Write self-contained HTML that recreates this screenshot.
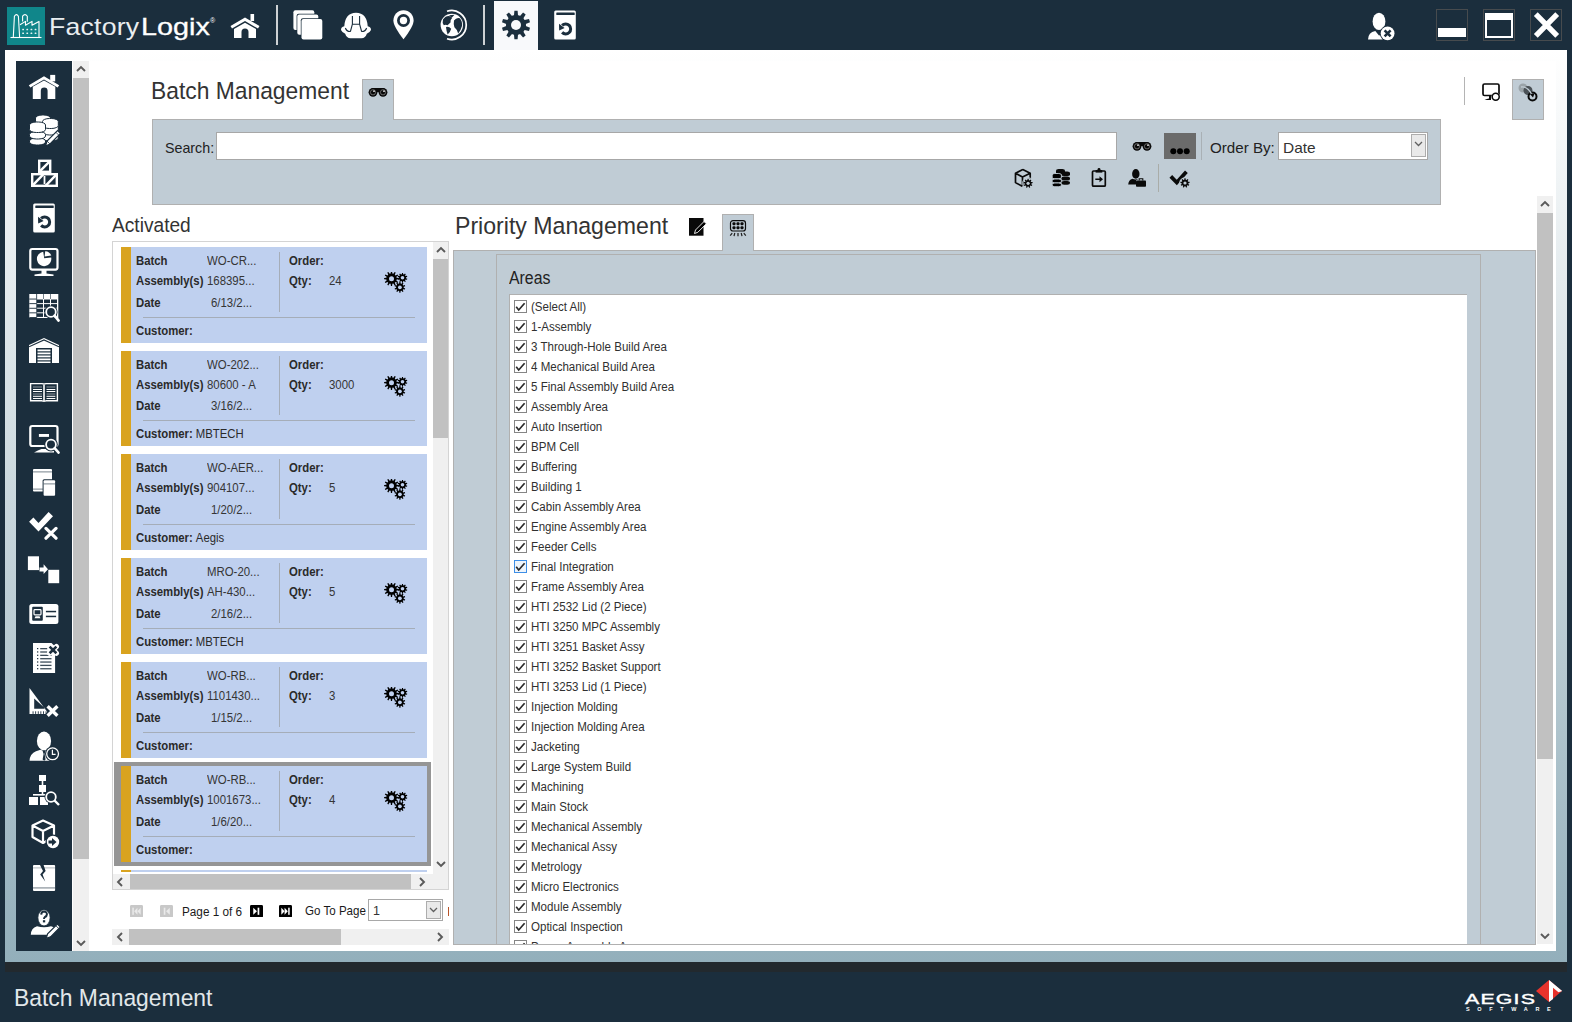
<!DOCTYPE html><html><head><meta charset="utf-8"><title>FactoryLogix</title><style>
*{margin:0;padding:0;box-sizing:border-box}
html,body{width:1572px;height:1022px;overflow:hidden;background:#1b2e3d;font-family:"Liberation Sans",sans-serif;position:relative}
.a{position:absolute;display:block}
.t{position:absolute;white-space:nowrap;line-height:1}
.pnl{background:#c0ccd5;border:1px solid #b0b0b0}
.sb{background:#f0f0f0}
.th{background:#c1c1c1}
.card{position:absolute;left:121px;width:306px;height:96px;background:#bfd0ef}
.card .g{position:absolute;left:0;top:0;width:10px;height:96px;background:#d9a31f}
.card .l{position:absolute;left:15px;font-size:12px;font-weight:bold;color:#2a2a2a;white-space:nowrap;line-height:1;transform:scaleX(0.945);transform-origin:0 0}
.card .v{position:absolute;font-size:12px;color:#353535;white-space:nowrap;line-height:1;transform:scaleX(0.95);transform-origin:0 0}
.card .vs{position:absolute;left:158px;top:5px;width:1px;height:60px;background:#a5adb8}
.card .hs{position:absolute;left:22px;top:70px;width:272px;height:1px;background:#a5adb8}
.cb{position:absolute;width:13px;height:13px;border:1px solid #858585;background:#fff}
.cb svg{position:absolute;left:0;top:0}
.it{position:absolute;font-size:12px;color:#303030;white-space:nowrap;line-height:1;transform:scaleX(0.962);transform-origin:0 0}
</style></head><body>
<div class="t" style="left:49px;top:14.5px;font-size:24px;color:#e9edf0;font-weight:normal;transform:scaleX(1.11);transform-origin:0 0;letter-spacing:0.2px">Factory</div>
<div class="t" style="left:141px;top:14.5px;font-size:24px;color:#fff;font-weight:normal;transform:scaleX(1.2);transform-origin:0 0;-webkit-text-stroke:0.3px #fff">Logix</div>
<div class="t" style="left:210px;top:17px;font-size:7px;color:#fff">&reg;</div>
<div class="a" style="left:276px;top:5px;width:2px;height:40px;background:rgba(255,255,255,0.78)"></div>
<div class="a" style="left:483px;top:5px;width:2px;height:40px;background:rgba(255,255,255,0.78)"></div>
<div class="a" style="left:494px;top:1px;width:44px;height:49px;background:#f8f9fb"></div>
<div class="a" style="left:1436px;top:9px;width:32px;height:32px;border:1px solid #474b4e"></div>
<div class="a" style="left:1483px;top:9px;width:32px;height:32px;border:1px solid #474b4e"></div>
<div class="a" style="left:1530px;top:9px;width:32px;height:32px;border:1px solid #474b4e"></div>
<div class="a" style="left:1438px;top:28px;width:28px;height:9px;background:#fff"></div>
<div class="a" style="left:1485px;top:12.5px;width:28px;height:25.5px;border:2.6px solid #fff;border-top-width:7.6px"></div>
<svg class="a" style="left:7px;top:7px" width="38" height="38" viewBox="7 7 38 38"><rect x="7" y="7" width="38" height="38" fill="#10868a"/><g fill="none" stroke="#fff" stroke-width="1.1" stroke-linejoin="round"><path d="M10.5,37.5 H41.5"/><path d="M13.3,37.3 L14.4,16.2 Q16.4,13 18.4,16.2 L19.6,37.3"/><path d="M22.6,21.5 V16.2 Q25,13 27.3,16.2 V21.8"/><path d="M20,24.8 L25.5,21.4 V25.2 L32,21.4 V25.2 L39,21.4 V37.3"/></g><g fill="#fff" fill-opacity="0.9"><rect x="22.20" y="28.8" width="1.8" height="1.5" rx="0.5"/><rect x="22.20" y="32.4" width="1.8" height="1.5" rx="0.5"/><rect x="26.35" y="28.8" width="1.8" height="1.5" rx="0.5"/><rect x="26.35" y="32.4" width="1.8" height="1.5" rx="0.5"/><rect x="30.50" y="28.8" width="1.8" height="1.5" rx="0.5"/><rect x="30.50" y="32.4" width="1.8" height="1.5" rx="0.5"/><rect x="34.65" y="28.8" width="1.8" height="1.5" rx="0.5"/><rect x="34.65" y="32.4" width="1.8" height="1.5" rx="0.5"/></g></svg>
<svg class="a" style="left:230px;top:14px;" width="30" height="25" viewBox="0 0 30 25"><rect x="20.5" y="0" width="3.6" height="7" fill="#fff"/><path d="M0.5,12 L15,3.5 L29.5,12 L28,14.6 L15,7 L2,14.6 Z" fill="#fff"/><path d="M4,15 L15,8.8 L26,15 V24 H18.5 V18 A3.5,3.5 0 0 0 11.5,18 V24 H4 Z" fill="#fff"/></svg>
<svg class="a" style="left:292px;top:9px" width="32" height="32" viewBox="292 9 32 32"><rect x="293.4" y="10.2" width="20.9" height="19.7" rx="2" fill="#fff"/><rect x="296.6" y="13.8" width="22.3" height="21.6" rx="2" fill="#1b2e3d"/><rect x="297.3" y="14.5" width="21" height="20.3" rx="2" fill="#fff"/><rect x="300.8" y="18.3" width="22.2" height="22" rx="2" fill="#1b2e3d"/><rect x="301.5" y="19" width="20.8" height="20.6" rx="2" fill="#fff"/></svg>
<svg class="a" style="left:340px;top:11px" width="32" height="29" viewBox="340 11 32 29"><path d="M341,30 Q341,26.8 344.3,26.2 Q345,13 356,12.7 Q367,13 367.7,26.2 Q371,26.8 371,30 Q369.5,33 366.8,33.8 Q365.5,38.2 361.5,38.2 H350.5 Q346.5,38.2 345.2,33.8 Q342.5,33 341,30 Z" fill="#fff"/><path d="M352.4,16 V24.2 H359.6 V16 M352.4,24.2 L350.4,31.5 M359.6,24.2 L361.6,31.5 M345.4,28 Q346.5,31.6 350.4,31.5 M366.6,28 Q365.5,31.6 361.6,31.5" stroke="#1b2e3d" stroke-width="1.1" fill="none"/></svg>
<svg class="a" style="left:393px;top:10px;" width="21" height="30" viewBox="0 0 21 30"><path d="M10.5,0.2 C16.3,0.2 20.6,4.6 20.6,10.5 C20.6,17 10.5,29.3 10.5,29.3 C10.5,29.3 0.4,17 0.4,10.5 C0.4,4.6 4.7,0.2 10.5,0.2 Z" fill="#fff"/><circle cx="10.5" cy="10.5" r="6.5" fill="#1b2e3d"/><circle cx="10.5" cy="10.5" r="3.7" fill="#fff"/></svg>
<svg class="a" style="left:439px;top:9px" width="29" height="32" viewBox="439 9 29 32"><path d="M447,11.3 A14.5,14.5 0 1 1 447,38.7" stroke="#fff" stroke-width="1.7" fill="none"/><circle cx="451.8" cy="25" r="11.2" fill="#fff"/><path d="M443,19.5 Q446,15.3 450,16.2 L452,18.3 Q449.5,20.5 450.5,22.5 L447.5,25.2 Q445.5,24.3 443.8,25.3 Q442,23 443,19.5 Z" fill="#1b2e3d"/><path d="M449.2,15.2 L454.5,14.8 L451.5,18 Z" fill="#1b2e3d"/><path d="M446,27 Q449,26.3 451.2,28.8 Q450.3,32.5 447.6,34.6 Q446.4,31 446,27 Z" fill="#1b2e3d"/><path d="M454,20.5 Q456.5,17 459.8,18.2 Q462.6,21.5 462,26 Q460.6,31 458.2,33.4 Q456.8,29 454.4,27.2 Q453.3,24 454,20.5 Z" fill="#1b2e3d"/></svg>
<svg class="a" style="left:501px;top:10px;" width="30" height="30" viewBox="0 0 30 30"><circle cx="15" cy="15" r="10" fill="#1b2e3d"/><path d="M12.98,5.41 L13.39,0.79 L16.61,0.79 L17.02,5.41 L19.00,6.06 L22.05,2.56 L24.66,4.45 L22.27,8.43 L23.50,10.12 L28.01,9.07 L29.01,12.14 L24.74,13.96 L24.74,16.04 L29.01,17.86 L28.01,20.93 L23.50,19.88 L22.27,21.57 L24.66,25.55 L22.05,27.44 L19.00,23.94 L17.02,24.59 L16.61,29.21 L13.39,29.21 L12.98,24.59 L11.00,23.94 L7.95,27.44 L5.34,25.55 L7.73,21.57 L6.50,19.88 L1.99,20.93 L0.99,17.86 L5.26,16.04 L5.26,13.96 L0.99,12.14 L1.99,9.07 L6.50,10.12 L7.73,8.43 L5.34,4.45 L7.95,2.56 L11.00,6.06 Z" fill="#1b2e3d"/><circle cx="15" cy="15" r="5.0" fill="#f8f9fb"/></svg>
<svg class="a" style="left:554px;top:10px;" width="22" height="30" viewBox="0 0 22 30"><rect x="0.2" y="0.4" width="21.6" height="29.2" rx="1.5" fill="#fff"/><rect x="2.3" y="2.6" width="18.4" height="2.5" rx="0.5" fill="#1b2e3d"/><path d="M8.1,15.4 A5,5 0 1 1 8.1,22.4" stroke="#1b2e3d" stroke-width="3" fill="none"/><path d="M5,13.8 L5.2,20.5 L10.6,18 Z" fill="#1b2e3d"/></svg>
<svg class="a" style="left:1367px;top:12px;" width="28" height="29" viewBox="0 0 28 29"><ellipse cx="12" cy="9.4" rx="6.4" ry="8.7" fill="#fff"/><path d="M1,27.4 Q1.2,20.5 8.3,19 L12.2,23.8 L15.8,19.3 Q18.5,19.8 20,21.5 L15.5,27.4 Z" fill="#fff"/><circle cx="20.6" cy="21.4" r="7.8" fill="#1b2e3d"/><circle cx="20.6" cy="21.4" r="6.9" fill="#fff"/><path d="M17.6,18.4 L23.6,24.4 M23.6,18.4 L17.6,24.4" stroke="#1b2e3d" stroke-width="2.6"/></svg>
<svg class="a" style="left:1533px;top:12px;" width="27" height="26" viewBox="0 0 27 26"><path d="M2.8,2.2 L24.2,23.8 M24.2,2.2 L2.8,23.8" stroke="#fff" stroke-width="5.4"/></svg>
<div class="a" style="left:5px;top:50px;width:1562px;height:912px;background:linear-gradient(#ffffff,#93afbb)"></div>
<div class="a" style="left:16px;top:61px;width:1540px;height:890px;background:#fff"></div>
<div class="a" style="left:5px;top:962px;width:1562px;height:10px;background:#22292e"></div>
<div class="t" style="left:14px;top:986px;font-size:24.5px;color:#e2e7ea;font-weight:normal;transform:scaleX(0.934);transform-origin:0 0;">Batch Management</div>
<div class="t" style="left:1465px;top:991.5px;font-size:14.5px;color:#fff;font-weight:normal;letter-spacing:0.8px;-webkit-text-stroke:0.4px #fff;transform:scaleX(1.47);transform-origin:0 0">AEGIS</div>
<div class="t" style="left:1466px;top:1007px;font-size:5.5px;color:#fff;font-weight:bold;letter-spacing:7.65px">SOFTWARE</div>
<svg class="a" style="left:1535px;top:979px" width="28" height="25" viewBox="1535 979 28 25"><path d="M1549,980 L1562,991 L1549,1002 L1536,991 Z" fill="#e8332c"/><path d="M1549,980 L1562.2,991 L1558.5,992.2 L1553,987.8 V999 L1549,1002 Z" fill="#fff"/></svg>
<div class="a" style="left:16px;top:61px;width:56px;height:890px;background:#1b2e3d"></div>
<div class="a sb" style="left:73px;top:61px;width:16px;height:890px;"></div>
<div class="a th" style="left:73px;top:78px;width:16px;height:781px;"></div>
<svg class="a" style="left:76px;top:65px" width="10" height="8" viewBox="0 0 10 8"><path d="M1,6 L5,2 L9,6" stroke="#5a5a5a" stroke-width="1.9" fill="none"/></svg>
<svg class="a" style="left:76px;top:939px" width="10" height="8" viewBox="0 0 10 8"><path d="M1,2 L5,6 L9,2" stroke="#5a5a5a" stroke-width="1.9" fill="none"/></svg>
<svg class="a" style="left:28px;top:74px" width="32" height="26" viewBox="28 74 32 26"><rect x="50.2" y="74.9" width="5" height="6.5" fill="#fff"/><path d="M28.8,85.2 L44,76.2 L59.2,85.2 L57.6,87.6 L44,79.6 L30.4,87.6 Z" fill="#fff"/><path d="M32.8,86.8 L44,80.6 L55.3,86.8 V99 H47.6 V90.8 A3.4,3.4 0 0 0 40.8,90.8 V99 H32.8 Z" fill="#fff"/></svg>
<svg class="a" style="left:28px;top:114px" width="34" height="33" viewBox="28 114 34 33"><g fill="#fff" stroke="#1b2e3d" stroke-width="1"><rect x="35.5" y="115" width="15" height="9" rx="7" ry="3"/><rect x="42.5" y="129" width="15.8" height="12" rx="7" ry="3"/><rect x="42.5" y="123.5" width="15.8" height="11.5" rx="7" ry="3"/><rect x="42.5" y="118.5" width="15.8" height="10" rx="7" ry="3"/><rect x="29.5" y="138" width="16" height="7" rx="7" ry="3"/><rect x="29.5" y="131.5" width="16" height="7.5" rx="7" ry="3"/><rect x="29.5" y="122" width="16" height="10.5" rx="7" ry="3"/></g><path d="M45.5,146 L47,141 L57.5,130.5 L60.5,133.5 L50,144 Z" fill="#fff" stroke="#1b2e3d" stroke-width="1.2"/><path d="M47,141 L50,144 M55.8,132.2 L58.8,135.2" stroke="#1b2e3d" stroke-width="0.8"/></svg>
<svg class="a" style="left:31px;top:159px;" width="27" height="28" viewBox="0 0 27 28"><g fill="none" stroke="#fff" stroke-width="2.4"><rect x="8.2" y="1.8" width="11" height="11"/><path d="M8.2,12.8 L19.2,1.8"/><rect x="1.2" y="15.2" width="24.6" height="11.6"/><path d="M1.2,26.8 L12.5,15.2 M14.5,26.8 L25.8,15.2"/></g><rect x="12.6" y="17" width="1.8" height="8" fill="#fff"/></svg>
<svg class="a" style="left:33px;top:203px;" width="22" height="30" viewBox="0 0 22 30"><rect x="0.2" y="0.4" width="21.6" height="29.2" rx="1.5" fill="#fff"/><rect x="2.3" y="2.6" width="18.4" height="2.5" rx="0.5" fill="#1b2e3d"/><path d="M8.1,15.4 A5,5 0 1 1 8.1,22.4" stroke="#1b2e3d" stroke-width="3" fill="none"/><path d="M5,13.8 L5.2,20.5 L10.6,18 Z" fill="#1b2e3d"/></svg>
<svg class="a" style="left:28px;top:246px" width="32" height="31" viewBox="28 246 32 31"><rect x="30.3" y="249" width="27.2" height="20.6" rx="2" fill="none" stroke="#fff" stroke-width="2.2"/><path d="M41.5,269 H46.5 V273.5 Q50,274 53.5,274.5 V276 H34.5 V274.5 Q38,274 41.5,273.5 Z" fill="#fff"/><path d="M43.2,251.8 A7.2,7.2 0 1 0 51.2,257.6 L44.2,258.2 Z" fill="#fff"/><path d="M45.2,251.3 A7,7 0 0 1 51.3,255.6 L44.6,256.6 Z" fill="#fff"/></svg>
<svg class="a" style="left:28px;top:292px" width="33" height="31" viewBox="28 292 33 31"><rect x="29.3" y="294" width="29" height="24" fill="#fff"/><g fill="#1b2e3d"><rect x="37.0" y="299.5" width="6" height="3.6"/><rect x="37.0" y="304.1" width="6" height="3.6"/><rect x="37.0" y="308.7" width="6" height="3.6"/><rect x="37.0" y="313.3" width="6" height="3.6"/><rect x="44.0" y="299.5" width="6" height="3.6"/><rect x="44.0" y="304.1" width="6" height="3.6"/><rect x="44.0" y="308.7" width="6" height="3.6"/><rect x="44.0" y="313.3" width="6" height="3.6"/><rect x="51.0" y="299.5" width="6" height="3.6"/><rect x="51.0" y="304.1" width="6" height="3.6"/><rect x="51.0" y="308.7" width="6" height="3.6"/><rect x="51.0" y="313.3" width="6" height="3.6"/><rect x="29.3" y="298.6" width="7" height="0.9"/><rect x="29.3" y="303.2" width="7" height="0.9"/><rect x="29.3" y="307.8" width="7" height="0.9"/><rect x="29.3" y="312.4" width="7" height="0.9"/><rect x="29.3" y="317.0" width="7" height="0.9"/><rect x="36.3" y="294" width="0.8" height="24"/><rect x="43.3" y="294" width="0.6" height="5"/><rect x="50.3" y="294" width="0.6" height="5"/></g><circle cx="51" cy="312" r="6.6" fill="#1b2e3d"/><circle cx="51" cy="312" r="4.8" fill="#1b2e3d" stroke="#fff" stroke-width="1.8"/><path d="M54.6,315.6 L58.6,320.6" stroke="#fff" stroke-width="2.6" stroke-linecap="round"/></svg>
<svg class="a" style="left:29px;top:338px;" width="30" height="25" viewBox="0 0 30 25"><path d="M0,7 L15,0 L30,7 V25 H0 Z" fill="#fff"/><path d="M0,8.8 L15,2 L30,8.8" stroke="#1b2e3d" stroke-width="1.2" fill="none"/><rect x="7" y="10" width="16" height="15" fill="#1b2e3d"/><g fill="#fff"><rect x="8.5" y="11.5" width="13" height="1.8"/><rect x="8.5" y="14.5" width="13" height="1.8"/><rect x="8.5" y="17.5" width="13" height="1.8"/><rect x="8.5" y="20.5" width="13" height="1.8"/><rect x="8.5" y="23.5" width="13" height="1.8"/></g></svg>
<svg class="a" style="left:29px;top:382px" width="30" height="22" viewBox="29 382 30 22"><path d="M30.6,383.6 H42 Q44,384.2 46,383.6 H57.4 V400.8 H46 Q44,401.5 42,400.8 H30.6 Z" fill="none" stroke="#fff" stroke-width="1.4"/><path d="M44,384.5 V401.5" stroke="#fff" stroke-width="1.6"/><g stroke="#fff" stroke-width="1"><path d="M33,387 H42 M46.5,387 H55.3" stroke-opacity="0.5"/><path d="M33,389.5 H42 M46.5,389.5 H55.3" stroke-opacity="1"/><path d="M33,391.5 H42 M46.5,391.5 H55.3" stroke-opacity="1"/><path d="M33,394 H42 M46.5,394 H55.3" stroke-opacity="0.5"/><path d="M33,396.3 H42 M46.5,396.3 H55.3" stroke-opacity="1"/><path d="M33,398.5 H42 M46.5,398.5 H55.3" stroke-opacity="1"/></g></svg>
<svg class="a" style="left:28px;top:423px" width="33" height="32" viewBox="28 423 33 32"><rect x="30.3" y="426" width="27.2" height="20" rx="2" fill="none" stroke="#fff" stroke-width="2.2"/><rect x="38.9" y="434" width="10.1" height="2.9" fill="#fff"/><path d="M34,452.5 Q38,450 41.5,449 H54 V452.5 Z" fill="#fff"/><circle cx="51" cy="444.6" r="6.8" fill="#1b2e3d"/><circle cx="51" cy="444.6" r="4.9" fill="#1b2e3d" stroke="#fff" stroke-width="1.8"/><path d="M54.6,448.2 L58.6,452.6" stroke="#fff" stroke-width="2.6" stroke-linecap="round"/></svg>
<svg class="a" style="left:32px;top:468px" width="25" height="29" viewBox="32 468 25 29"><rect x="33" y="469" width="19" height="22.6" rx="1" fill="#fff"/><rect x="33" y="471.4" width="19" height="1" fill="#1b2e3d" fill-opacity="0.6"/><rect x="33" y="488.6" width="19" height="1" fill="#1b2e3d" fill-opacity="0.6"/><rect x="42.6" y="479.2" width="13.5" height="17.5" rx="1.5" fill="#1b2e3d"/><rect x="43.6" y="480.2" width="11.5" height="15.5" rx="1" fill="#fff"/><rect x="43.6" y="483.4" width="11.5" height="1" fill="#1b2e3d" fill-opacity="0.6"/></svg>
<svg class="a" style="left:28px;top:511px" width="30" height="29" viewBox="28 511 30 29"><path d="M29.1,521.8 L33.4,517.5 L38.5,523 L48.6,512 L53,516.3 L38.5,531.6 Z" fill="#fff"/><path d="M46,528.4 L56,538.2 M56,528.4 L46,538.2" stroke="#fff" stroke-width="3.2" stroke-linecap="round"/></svg>
<svg class="a" style="left:27px;top:555px" width="33" height="29" viewBox="27 555 33 29"><rect x="27.9" y="556.3" width="11.1" height="13.8" fill="#fff"/><rect x="48.3" y="569.8" width="10.9" height="13.4" fill="#fff"/><path d="M39.5,567.4 H43.6 V564.3 L48,569.2 L43.6,574.1 V571.4 H39.5 Z" fill="#fff"/></svg>
<svg class="a" style="left:28px;top:603px" width="32" height="23" viewBox="28 603 32 23"><rect x="29.3" y="604" width="29.1" height="20" rx="2.5" fill="#fff"/><rect x="32.2" y="606.7" width="10.6" height="14.1" rx="1" fill="#1b2e3d"/><rect x="34" y="609.6" width="7" height="5.2" rx="0.8" fill="none" stroke="#fff" stroke-width="1.2"/><path d="M34.5,618.2 H40.5 L39.5,616.2 H35.5 Z" fill="#fff"/><rect x="45.9" y="610.8" width="10.2" height="1.5" fill="#1b2e3d"/><rect x="45.9" y="615.7" width="10.2" height="1.5" fill="#1b2e3d"/></svg>
<svg class="a" style="left:32px;top:642px" width="28" height="32" viewBox="32 642 28 32"><path d="M33,643.1 H51.5 L55.1,646.5 V672.9 H33 Z" fill="#fff"/><g fill="#1b2e3d"><rect x="37" y="648.00" width="1.3" height="1.2"/><rect x="40.2" y="648.00" width="7" height="1.3" fill-opacity="0.85"/><rect x="37" y="651.35" width="1.3" height="1.2"/><rect x="40.2" y="651.35" width="7" height="1.3" fill-opacity="0.85"/><rect x="37" y="654.70" width="1.3" height="1.2"/><rect x="40.2" y="654.70" width="11.3" height="1.3" fill-opacity="0.85"/><rect x="37" y="658.05" width="1.3" height="1.2"/><rect x="40.2" y="658.05" width="11.3" height="1.3" fill-opacity="0.85"/><rect x="37" y="661.40" width="1.3" height="1.2"/><rect x="40.2" y="661.40" width="11.3" height="1.3" fill-opacity="0.85"/><rect x="37" y="664.75" width="1.3" height="1.2"/><rect x="40.2" y="664.75" width="11.3" height="1.3" fill-opacity="0.85"/><rect x="37" y="668.10" width="1.3" height="1.2"/><rect x="40.2" y="668.10" width="11.3" height="1.3" fill-opacity="0.85"/></g><path d="M49.6,646.6 L56.4,653.2 M56.4,646.6 L49.6,653.2" stroke="#fff" stroke-width="5.2" stroke-linecap="round"/><path d="M49.6,646.6 L56.4,653.2 M56.4,646.6 L49.6,653.2" stroke="#1b2e3d" stroke-width="2.6"/></svg>
<svg class="a" style="left:28px;top:687px" width="32" height="31" viewBox="28 687 32 31"><path d="M29.5,688.1 L48.8,713.9 H29.5 Z M34.2,698.6 V708.8 H45.5 Z" fill="#fff" fill-rule="evenodd"/><g fill="#1b2e3d"><rect x="32.6" y="711.3" width="0.9" height="2.6"/><rect x="35.2" y="711.3" width="0.9" height="2.6"/><rect x="37.8" y="711.3" width="0.9" height="2.6"/><rect x="40.4" y="711.3" width="0.9" height="2.6"/><rect x="43.0" y="711.3" width="0.9" height="2.6"/><rect x="45.6" y="711.3" width="0.9" height="2.6"/></g><path d="M47.6,706.2 L57.4,715.8 M57.4,706.2 L47.6,715.8" stroke="#1b2e3d" stroke-width="6"/><path d="M47.6,706.2 L57.4,715.8 M57.4,706.2 L47.6,715.8" stroke="#fff" stroke-width="3.3"/></svg>
<svg class="a" style="left:28px;top:730px" width="33" height="32" viewBox="28 730 33 32"><ellipse cx="44" cy="740.9" rx="7.1" ry="9.4" fill="#fff"/><path d="M29.5,760.8 Q30,753.5 36,751.2 L40.5,749.8 Q44,751.5 47.5,749.8 L50,750.5 V760.8 Z" fill="#fff"/><path d="M42.5,750.5 L43.6,754 L42.6,759.5 L44.2,760.8 L45.6,759.5 L44.6,754 L45.5,750.5 Z" fill="#1b2e3d"/><circle cx="52.6" cy="753.8" r="7.6" fill="#1b2e3d"/><circle cx="52.6" cy="753.8" r="5.9" fill="#1b2e3d" stroke="#fff" stroke-width="1.3"/><path d="M52.4,749.8 V754.4 H55.6" stroke="#fff" stroke-width="1.2" fill="none"/></svg>
<svg class="a" style="left:29px;top:775px;" width="31" height="31" viewBox="0 0 31 31"><rect x="10" y="0" width="7" height="6" fill="#fff"/><rect x="12.7" y="6" width="1.6" height="4" fill="#fff"/><rect x="10" y="10" width="7" height="7" fill="#fff"/><rect x="12.7" y="17" width="1.6" height="3" fill="#fff"/><rect x="4" y="19" width="14" height="1.6" fill="#fff"/><rect x="0" y="22" width="9" height="8" fill="#fff"/><rect x="11" y="22" width="8" height="8" fill="#fff"/><circle cx="22" cy="22" r="6.5" fill="#1b2e3d"/><circle cx="22" cy="22" r="4.8" fill="none" stroke="#fff" stroke-width="1.8"/><path d="M25.5,25.5 L30,30" stroke="#fff" stroke-width="2.4"/></svg>
<svg class="a" style="left:31px;top:819px;" width="30" height="31" viewBox="0 0 30 31"><path d="M12,1.5 L23,6.5 V18 L12,24 L1.5,18 V6.5 Z M1.5,6.5 L12,12 L23,6.5 M12,12 V24" fill="none" stroke="#fff" stroke-width="2.2" stroke-linejoin="round"/><circle cx="22" cy="23" r="7.5" fill="#1b2e3d"/><circle cx="22" cy="23" r="6.2" fill="#fff"/><path d="M17.5,21.5 H21 V19 L25.5,23 L21,27 V24.5 H17.5 Z" fill="#1b2e3d"/></svg>
<svg class="a" style="left:32px;top:864px" width="24" height="28" viewBox="32 864 24 28"><rect x="33" y="865.1" width="22.1" height="25.8" rx="1" fill="#fff"/><rect x="33" y="867.4" width="22.1" height="1" fill="#1b2e3d" fill-opacity="0.35"/><rect x="33" y="887.2" width="22.1" height="1.4" fill="#1b2e3d" fill-opacity="0.45"/><path d="M40,865 L43.6,865 L45.6,871 L42.6,874.6 L45.2,881.5 L40.2,874.6 L43,871 Z" fill="#1b2e3d"/></svg>
<svg class="a" style="left:29px;top:908px" width="33" height="32" viewBox="29 908 33 32"><ellipse cx="44" cy="917.8" rx="6.1" ry="8.1" fill="#fff" stroke="#1b2e3d" stroke-width="0.8"/><path d="M30.8,934.8 Q31,928 37,926.2 Q44,928.5 51,926.2 Q54,927 56,929 L51,934.8 Z" fill="#fff"/><path d="M41.2,914.6 Q41.3,911.6 44.1,911.6 Q47,911.7 46.9,914.4 Q46.8,916.2 44.9,917 Q44,917.6 44,919" stroke="#1b2e3d" stroke-width="2" fill="none"/><rect x="42.9" y="920.2" width="2.3" height="2.2" fill="#1b2e3d"/><path d="M46.2,938.4 L47.6,933.8 L57.4,924 L60.4,927 L50.6,936.8 Z" fill="#fff" stroke="#1b2e3d" stroke-width="1.2"/><path d="M55.8,925.6 L58.8,928.6" stroke="#1b2e3d" stroke-width="0.9"/></svg>
<div class="t" style="left:151px;top:79px;font-size:24.5px;color:#333;font-weight:normal;transform:scaleX(0.932);transform-origin:0 0;">Batch Management</div>
<div class="a pnl" style="left:362px;top:79px;width:32px;height:41px;border-bottom:none"></div>
<div class="a pnl" style="left:152px;top:119px;width:1289px;height:86px;"></div>
<div class="a" style="left:363px;top:118px;width:30px;height:2px;background:#c0ccd5"></div>
<div class="t" style="left:165px;top:140px;font-size:15px;color:#222;font-weight:normal;transform:scaleX(0.95);transform-origin:0 0;">Search:</div>
<div class="a" style="left:216px;top:132px;width:901px;height:28px;background:#fff;border:1px solid #a7a7a7"></div>
<div class="a" style="left:1164px;top:133px;width:32px;height:26px;background:#6b6b6b"></div>
<div class="a" style="left:1201px;top:132px;width:1px;height:28px;background:#a9b0b5"></div>
<div class="t" style="left:1210px;top:140px;font-size:15px;color:#222;font-weight:normal;transform:scaleX(1.01);transform-origin:0 0;">Order By:</div>
<div class="a" style="left:1278px;top:132px;width:150px;height:28px;background:#fff;border:1px solid #a7a7a7"></div>
<div class="t" style="left:1283px;top:140px;font-size:15px;color:#333;font-weight:normal;transform:scaleX(1.03);transform-origin:0 0;">Date</div>
<div class="a" style="left:1411px;top:134px;width:15px;height:23px;background:#e9e9e9;border:1px solid #adadad"></div>
<svg class="a" style="left:1414px;top:141px" width="9" height="6" viewBox="0 0 9 6"><path d="M1,1 L4.5,4.5 L8,1" stroke="#606060" stroke-width="1.3" fill="none"/></svg>
<div class="a" style="left:1158px;top:164px;width:1px;height:28px;background:#a9aca8"></div>
<div class="a" style="left:1464px;top:77px;width:1px;height:28px;background:#b4b4b4"></div>
<div class="a pnl" style="left:1512px;top:79px;width:32px;height:41px;"></div>
<div class="t" style="left:112px;top:214.5px;font-size:20.5px;color:#333;font-weight:normal;transform:scaleX(0.934);transform-origin:0 0;">Activated</div>
<div class="a" style="left:112px;top:241px;width:337px;height:649px;border:1px solid #d4d4d4;background:#fff"></div>
<div class="a sb" style="left:433px;top:242px;width:15px;height:632px;"></div>
<div class="a th" style="left:433px;top:259px;width:15px;height:179px;"></div>
<svg class="a" style="left:436px;top:246px" width="10" height="8" viewBox="0 0 10 8"><path d="M1,6 L5,2 L9,6" stroke="#5a5a5a" stroke-width="1.9" fill="none"/></svg>
<svg class="a" style="left:436px;top:860px" width="10" height="8" viewBox="0 0 10 8"><path d="M1,2 L5,6 L9,2" stroke="#5a5a5a" stroke-width="1.9" fill="none"/></svg>
<div class="a sb" style="left:113px;top:874px;width:335px;height:15px;"></div>
<div class="a th" style="left:130px;top:874px;width:281px;height:15px;"></div>
<svg class="a" style="left:116px;top:877px" width="8" height="10" viewBox="0 0 8 10"><path d="M6,1 L2,5 L6,9" stroke="#5a5a5a" stroke-width="1.9" fill="none"/></svg>
<svg class="a" style="left:418px;top:877px" width="8" height="10" viewBox="0 0 8 10"><path d="M2,1 L6,5 L2,9" stroke="#5a5a5a" stroke-width="1.9" fill="none"/></svg>
<div class="a" style="left:114px;top:762px;width:317px;height:104px;background:#959595"></div>
<div class="card" style="top:247px;height:96px"><div class="g" style="height:96px"></div><div class="l" style="top:8px">Batch</div><div class="v" style="left:86px;top:8px">WO-CR...</div><div class="l" style="top:28px">Assembly(s)</div><div class="v" style="left:86px;top:28px">168395...</div><div class="l" style="left:168px;top:8px">Order:</div><div class="l" style="left:168px;top:28px">Qty:</div><div class="v" style="left:208px;top:28px">24</div><svg style="position:absolute;left:263px;top:25px" width="25" height="23" viewBox="0 0 25 23"><path d="M6.66,1.57 L6.92,-0.68 L8.08,-0.68 L8.34,1.57 L9.34,1.84 L10.69,0.02 L11.69,0.60 L10.79,2.68 L11.52,3.41 L13.60,2.51 L14.18,3.51 L12.36,4.86 L12.63,5.86 L14.88,6.12 L14.88,7.28 L12.63,7.54 L12.36,8.54 L14.18,9.89 L13.60,10.89 L11.52,9.99 L10.79,10.72 L11.69,12.80 L10.69,13.38 L9.34,11.56 L8.34,11.83 L8.08,14.08 L6.92,14.08 L6.66,11.83 L5.66,11.56 L4.31,13.38 L3.31,12.80 L4.21,10.72 L3.48,9.99 L1.40,10.89 L0.82,9.89 L2.64,8.54 L2.37,7.54 L0.12,7.28 L0.12,6.12 L2.37,5.86 L2.64,4.86 L0.82,3.51 L1.40,2.51 L3.48,3.41 L4.21,2.68 L3.31,0.60 L4.31,0.02 L5.66,1.84 Z" fill="#000"/><circle cx="7.5" cy="6.7" r="2.5" fill="#bfd0ef"/><path d="M17.82,2.37 L18.01,0.92 L18.99,0.92 L19.18,2.37 L19.97,2.62 L20.97,1.57 L21.76,2.14 L21.07,3.42 L21.56,4.09 L22.98,3.83 L23.29,4.76 L21.98,5.38 L21.98,6.22 L23.29,6.84 L22.98,7.77 L21.56,7.51 L21.07,8.18 L21.76,9.46 L20.97,10.03 L19.97,8.98 L19.18,9.23 L18.99,10.68 L18.01,10.68 L17.82,9.23 L17.03,8.98 L16.03,10.03 L15.24,9.46 L15.93,8.18 L15.44,7.51 L14.02,7.77 L13.71,6.84 L15.02,6.22 L15.02,5.38 L13.71,4.76 L14.02,3.83 L15.44,4.09 L15.93,3.42 L15.24,2.14 L16.03,1.57 L17.03,2.62 Z" fill="#000"/><circle cx="18.5" cy="5.8" r="1.8" fill="#bfd0ef"/><path d="M15.16,11.57 L15.36,9.93 L16.44,9.93 L16.64,11.57 L17.50,11.85 L18.62,10.63 L19.50,11.27 L18.69,12.72 L19.22,13.45 L20.84,13.12 L21.18,14.16 L19.67,14.85 L19.67,15.75 L21.18,16.44 L20.84,17.48 L19.22,17.15 L18.69,17.88 L19.50,19.33 L18.62,19.97 L17.50,18.75 L16.64,19.03 L16.44,20.67 L15.36,20.67 L15.16,19.03 L14.30,18.75 L13.18,19.97 L12.30,19.33 L13.11,17.88 L12.58,17.15 L10.96,17.48 L10.62,16.44 L12.13,15.75 L12.13,14.85 L10.62,14.16 L10.96,13.12 L12.58,13.45 L13.11,12.72 L12.30,11.27 L13.18,10.63 L14.30,11.85 Z" fill="#000"/><circle cx="15.9" cy="15.3" r="1.9" fill="#bfd0ef"/></svg><div style="position:absolute;left:0;top:0px;width:306px;height:96px"><div class="l" style="top:50px">Date</div><div class="v" style="left:90px;top:50px">6/13/2...</div><div class="vs" style="top:5px;height:60px"></div><div class="hs"></div><div class="l" style="top:78px">Customer: <span style="font-weight:normal"></span></div></div></div>
<div class="card" style="top:351px;height:95px"><div class="g" style="height:95px"></div><div class="l" style="top:8px">Batch</div><div class="v" style="left:86px;top:8px">WO-202...</div><div class="l" style="top:28px">Assembly(s)</div><div class="v" style="left:86px;top:28px">80600 - A</div><div class="l" style="left:168px;top:8px">Order:</div><div class="l" style="left:168px;top:28px">Qty:</div><div class="v" style="left:208px;top:28px">3000</div><svg style="position:absolute;left:263px;top:25px" width="25" height="23" viewBox="0 0 25 23"><path d="M6.66,1.57 L6.92,-0.68 L8.08,-0.68 L8.34,1.57 L9.34,1.84 L10.69,0.02 L11.69,0.60 L10.79,2.68 L11.52,3.41 L13.60,2.51 L14.18,3.51 L12.36,4.86 L12.63,5.86 L14.88,6.12 L14.88,7.28 L12.63,7.54 L12.36,8.54 L14.18,9.89 L13.60,10.89 L11.52,9.99 L10.79,10.72 L11.69,12.80 L10.69,13.38 L9.34,11.56 L8.34,11.83 L8.08,14.08 L6.92,14.08 L6.66,11.83 L5.66,11.56 L4.31,13.38 L3.31,12.80 L4.21,10.72 L3.48,9.99 L1.40,10.89 L0.82,9.89 L2.64,8.54 L2.37,7.54 L0.12,7.28 L0.12,6.12 L2.37,5.86 L2.64,4.86 L0.82,3.51 L1.40,2.51 L3.48,3.41 L4.21,2.68 L3.31,0.60 L4.31,0.02 L5.66,1.84 Z" fill="#000"/><circle cx="7.5" cy="6.7" r="2.5" fill="#bfd0ef"/><path d="M17.82,2.37 L18.01,0.92 L18.99,0.92 L19.18,2.37 L19.97,2.62 L20.97,1.57 L21.76,2.14 L21.07,3.42 L21.56,4.09 L22.98,3.83 L23.29,4.76 L21.98,5.38 L21.98,6.22 L23.29,6.84 L22.98,7.77 L21.56,7.51 L21.07,8.18 L21.76,9.46 L20.97,10.03 L19.97,8.98 L19.18,9.23 L18.99,10.68 L18.01,10.68 L17.82,9.23 L17.03,8.98 L16.03,10.03 L15.24,9.46 L15.93,8.18 L15.44,7.51 L14.02,7.77 L13.71,6.84 L15.02,6.22 L15.02,5.38 L13.71,4.76 L14.02,3.83 L15.44,4.09 L15.93,3.42 L15.24,2.14 L16.03,1.57 L17.03,2.62 Z" fill="#000"/><circle cx="18.5" cy="5.8" r="1.8" fill="#bfd0ef"/><path d="M15.16,11.57 L15.36,9.93 L16.44,9.93 L16.64,11.57 L17.50,11.85 L18.62,10.63 L19.50,11.27 L18.69,12.72 L19.22,13.45 L20.84,13.12 L21.18,14.16 L19.67,14.85 L19.67,15.75 L21.18,16.44 L20.84,17.48 L19.22,17.15 L18.69,17.88 L19.50,19.33 L18.62,19.97 L17.50,18.75 L16.64,19.03 L16.44,20.67 L15.36,20.67 L15.16,19.03 L14.30,18.75 L13.18,19.97 L12.30,19.33 L13.11,17.88 L12.58,17.15 L10.96,17.48 L10.62,16.44 L12.13,15.75 L12.13,14.85 L10.62,14.16 L10.96,13.12 L12.58,13.45 L13.11,12.72 L12.30,11.27 L13.18,10.63 L14.30,11.85 Z" fill="#000"/><circle cx="15.9" cy="15.3" r="1.9" fill="#bfd0ef"/></svg><div style="position:absolute;left:0;top:-1px;width:306px;height:96px"><div class="l" style="top:50px">Date</div><div class="v" style="left:90px;top:50px">3/16/2...</div><div class="vs" style="top:6px;height:59px"></div><div class="hs"></div><div class="l" style="top:78px">Customer: <span style="font-weight:normal">MBTECH</span></div></div></div>
<div class="card" style="top:454px;height:96px"><div class="g" style="height:96px"></div><div class="l" style="top:8px">Batch</div><div class="v" style="left:86px;top:8px">WO-AER...</div><div class="l" style="top:28px">Assembly(s)</div><div class="v" style="left:86px;top:28px">904107...</div><div class="l" style="left:168px;top:8px">Order:</div><div class="l" style="left:168px;top:28px">Qty:</div><div class="v" style="left:208px;top:28px">5</div><svg style="position:absolute;left:263px;top:25px" width="25" height="23" viewBox="0 0 25 23"><path d="M6.66,1.57 L6.92,-0.68 L8.08,-0.68 L8.34,1.57 L9.34,1.84 L10.69,0.02 L11.69,0.60 L10.79,2.68 L11.52,3.41 L13.60,2.51 L14.18,3.51 L12.36,4.86 L12.63,5.86 L14.88,6.12 L14.88,7.28 L12.63,7.54 L12.36,8.54 L14.18,9.89 L13.60,10.89 L11.52,9.99 L10.79,10.72 L11.69,12.80 L10.69,13.38 L9.34,11.56 L8.34,11.83 L8.08,14.08 L6.92,14.08 L6.66,11.83 L5.66,11.56 L4.31,13.38 L3.31,12.80 L4.21,10.72 L3.48,9.99 L1.40,10.89 L0.82,9.89 L2.64,8.54 L2.37,7.54 L0.12,7.28 L0.12,6.12 L2.37,5.86 L2.64,4.86 L0.82,3.51 L1.40,2.51 L3.48,3.41 L4.21,2.68 L3.31,0.60 L4.31,0.02 L5.66,1.84 Z" fill="#000"/><circle cx="7.5" cy="6.7" r="2.5" fill="#bfd0ef"/><path d="M17.82,2.37 L18.01,0.92 L18.99,0.92 L19.18,2.37 L19.97,2.62 L20.97,1.57 L21.76,2.14 L21.07,3.42 L21.56,4.09 L22.98,3.83 L23.29,4.76 L21.98,5.38 L21.98,6.22 L23.29,6.84 L22.98,7.77 L21.56,7.51 L21.07,8.18 L21.76,9.46 L20.97,10.03 L19.97,8.98 L19.18,9.23 L18.99,10.68 L18.01,10.68 L17.82,9.23 L17.03,8.98 L16.03,10.03 L15.24,9.46 L15.93,8.18 L15.44,7.51 L14.02,7.77 L13.71,6.84 L15.02,6.22 L15.02,5.38 L13.71,4.76 L14.02,3.83 L15.44,4.09 L15.93,3.42 L15.24,2.14 L16.03,1.57 L17.03,2.62 Z" fill="#000"/><circle cx="18.5" cy="5.8" r="1.8" fill="#bfd0ef"/><path d="M15.16,11.57 L15.36,9.93 L16.44,9.93 L16.64,11.57 L17.50,11.85 L18.62,10.63 L19.50,11.27 L18.69,12.72 L19.22,13.45 L20.84,13.12 L21.18,14.16 L19.67,14.85 L19.67,15.75 L21.18,16.44 L20.84,17.48 L19.22,17.15 L18.69,17.88 L19.50,19.33 L18.62,19.97 L17.50,18.75 L16.64,19.03 L16.44,20.67 L15.36,20.67 L15.16,19.03 L14.30,18.75 L13.18,19.97 L12.30,19.33 L13.11,17.88 L12.58,17.15 L10.96,17.48 L10.62,16.44 L12.13,15.75 L12.13,14.85 L10.62,14.16 L10.96,13.12 L12.58,13.45 L13.11,12.72 L12.30,11.27 L13.18,10.63 L14.30,11.85 Z" fill="#000"/><circle cx="15.9" cy="15.3" r="1.9" fill="#bfd0ef"/></svg><div style="position:absolute;left:0;top:0px;width:306px;height:96px"><div class="l" style="top:50px">Date</div><div class="v" style="left:90px;top:50px">1/20/2...</div><div class="vs" style="top:5px;height:60px"></div><div class="hs"></div><div class="l" style="top:78px">Customer: <span style="font-weight:normal">Aegis</span></div></div></div>
<div class="card" style="top:558px;height:96px"><div class="g" style="height:96px"></div><div class="l" style="top:8px">Batch</div><div class="v" style="left:86px;top:8px">MRO-20...</div><div class="l" style="top:28px">Assembly(s)</div><div class="v" style="left:86px;top:28px">AH-430...</div><div class="l" style="left:168px;top:8px">Order:</div><div class="l" style="left:168px;top:28px">Qty:</div><div class="v" style="left:208px;top:28px">5</div><svg style="position:absolute;left:263px;top:25px" width="25" height="23" viewBox="0 0 25 23"><path d="M6.66,1.57 L6.92,-0.68 L8.08,-0.68 L8.34,1.57 L9.34,1.84 L10.69,0.02 L11.69,0.60 L10.79,2.68 L11.52,3.41 L13.60,2.51 L14.18,3.51 L12.36,4.86 L12.63,5.86 L14.88,6.12 L14.88,7.28 L12.63,7.54 L12.36,8.54 L14.18,9.89 L13.60,10.89 L11.52,9.99 L10.79,10.72 L11.69,12.80 L10.69,13.38 L9.34,11.56 L8.34,11.83 L8.08,14.08 L6.92,14.08 L6.66,11.83 L5.66,11.56 L4.31,13.38 L3.31,12.80 L4.21,10.72 L3.48,9.99 L1.40,10.89 L0.82,9.89 L2.64,8.54 L2.37,7.54 L0.12,7.28 L0.12,6.12 L2.37,5.86 L2.64,4.86 L0.82,3.51 L1.40,2.51 L3.48,3.41 L4.21,2.68 L3.31,0.60 L4.31,0.02 L5.66,1.84 Z" fill="#000"/><circle cx="7.5" cy="6.7" r="2.5" fill="#bfd0ef"/><path d="M17.82,2.37 L18.01,0.92 L18.99,0.92 L19.18,2.37 L19.97,2.62 L20.97,1.57 L21.76,2.14 L21.07,3.42 L21.56,4.09 L22.98,3.83 L23.29,4.76 L21.98,5.38 L21.98,6.22 L23.29,6.84 L22.98,7.77 L21.56,7.51 L21.07,8.18 L21.76,9.46 L20.97,10.03 L19.97,8.98 L19.18,9.23 L18.99,10.68 L18.01,10.68 L17.82,9.23 L17.03,8.98 L16.03,10.03 L15.24,9.46 L15.93,8.18 L15.44,7.51 L14.02,7.77 L13.71,6.84 L15.02,6.22 L15.02,5.38 L13.71,4.76 L14.02,3.83 L15.44,4.09 L15.93,3.42 L15.24,2.14 L16.03,1.57 L17.03,2.62 Z" fill="#000"/><circle cx="18.5" cy="5.8" r="1.8" fill="#bfd0ef"/><path d="M15.16,11.57 L15.36,9.93 L16.44,9.93 L16.64,11.57 L17.50,11.85 L18.62,10.63 L19.50,11.27 L18.69,12.72 L19.22,13.45 L20.84,13.12 L21.18,14.16 L19.67,14.85 L19.67,15.75 L21.18,16.44 L20.84,17.48 L19.22,17.15 L18.69,17.88 L19.50,19.33 L18.62,19.97 L17.50,18.75 L16.64,19.03 L16.44,20.67 L15.36,20.67 L15.16,19.03 L14.30,18.75 L13.18,19.97 L12.30,19.33 L13.11,17.88 L12.58,17.15 L10.96,17.48 L10.62,16.44 L12.13,15.75 L12.13,14.85 L10.62,14.16 L10.96,13.12 L12.58,13.45 L13.11,12.72 L12.30,11.27 L13.18,10.63 L14.30,11.85 Z" fill="#000"/><circle cx="15.9" cy="15.3" r="1.9" fill="#bfd0ef"/></svg><div style="position:absolute;left:0;top:0px;width:306px;height:96px"><div class="l" style="top:50px">Date</div><div class="v" style="left:90px;top:50px">2/16/2...</div><div class="vs" style="top:5px;height:60px"></div><div class="hs"></div><div class="l" style="top:78px">Customer: <span style="font-weight:normal">MBTECH</span></div></div></div>
<div class="card" style="top:662px;height:96px"><div class="g" style="height:96px"></div><div class="l" style="top:8px">Batch</div><div class="v" style="left:86px;top:8px">WO-RB...</div><div class="l" style="top:28px">Assembly(s)</div><div class="v" style="left:86px;top:28px">1101430...</div><div class="l" style="left:168px;top:8px">Order:</div><div class="l" style="left:168px;top:28px">Qty:</div><div class="v" style="left:208px;top:28px">3</div><svg style="position:absolute;left:263px;top:25px" width="25" height="23" viewBox="0 0 25 23"><path d="M6.66,1.57 L6.92,-0.68 L8.08,-0.68 L8.34,1.57 L9.34,1.84 L10.69,0.02 L11.69,0.60 L10.79,2.68 L11.52,3.41 L13.60,2.51 L14.18,3.51 L12.36,4.86 L12.63,5.86 L14.88,6.12 L14.88,7.28 L12.63,7.54 L12.36,8.54 L14.18,9.89 L13.60,10.89 L11.52,9.99 L10.79,10.72 L11.69,12.80 L10.69,13.38 L9.34,11.56 L8.34,11.83 L8.08,14.08 L6.92,14.08 L6.66,11.83 L5.66,11.56 L4.31,13.38 L3.31,12.80 L4.21,10.72 L3.48,9.99 L1.40,10.89 L0.82,9.89 L2.64,8.54 L2.37,7.54 L0.12,7.28 L0.12,6.12 L2.37,5.86 L2.64,4.86 L0.82,3.51 L1.40,2.51 L3.48,3.41 L4.21,2.68 L3.31,0.60 L4.31,0.02 L5.66,1.84 Z" fill="#000"/><circle cx="7.5" cy="6.7" r="2.5" fill="#bfd0ef"/><path d="M17.82,2.37 L18.01,0.92 L18.99,0.92 L19.18,2.37 L19.97,2.62 L20.97,1.57 L21.76,2.14 L21.07,3.42 L21.56,4.09 L22.98,3.83 L23.29,4.76 L21.98,5.38 L21.98,6.22 L23.29,6.84 L22.98,7.77 L21.56,7.51 L21.07,8.18 L21.76,9.46 L20.97,10.03 L19.97,8.98 L19.18,9.23 L18.99,10.68 L18.01,10.68 L17.82,9.23 L17.03,8.98 L16.03,10.03 L15.24,9.46 L15.93,8.18 L15.44,7.51 L14.02,7.77 L13.71,6.84 L15.02,6.22 L15.02,5.38 L13.71,4.76 L14.02,3.83 L15.44,4.09 L15.93,3.42 L15.24,2.14 L16.03,1.57 L17.03,2.62 Z" fill="#000"/><circle cx="18.5" cy="5.8" r="1.8" fill="#bfd0ef"/><path d="M15.16,11.57 L15.36,9.93 L16.44,9.93 L16.64,11.57 L17.50,11.85 L18.62,10.63 L19.50,11.27 L18.69,12.72 L19.22,13.45 L20.84,13.12 L21.18,14.16 L19.67,14.85 L19.67,15.75 L21.18,16.44 L20.84,17.48 L19.22,17.15 L18.69,17.88 L19.50,19.33 L18.62,19.97 L17.50,18.75 L16.64,19.03 L16.44,20.67 L15.36,20.67 L15.16,19.03 L14.30,18.75 L13.18,19.97 L12.30,19.33 L13.11,17.88 L12.58,17.15 L10.96,17.48 L10.62,16.44 L12.13,15.75 L12.13,14.85 L10.62,14.16 L10.96,13.12 L12.58,13.45 L13.11,12.72 L12.30,11.27 L13.18,10.63 L14.30,11.85 Z" fill="#000"/><circle cx="15.9" cy="15.3" r="1.9" fill="#bfd0ef"/></svg><div style="position:absolute;left:0;top:0px;width:306px;height:96px"><div class="l" style="top:50px">Date</div><div class="v" style="left:90px;top:50px">1/15/2...</div><div class="vs" style="top:5px;height:60px"></div><div class="hs"></div><div class="l" style="top:78px">Customer: <span style="font-weight:normal"></span></div></div></div>
<div class="card" style="top:766px;height:96px"><div class="g" style="height:96px"></div><div class="l" style="top:8px">Batch</div><div class="v" style="left:86px;top:8px">WO-RB...</div><div class="l" style="top:28px">Assembly(s)</div><div class="v" style="left:86px;top:28px">1001673...</div><div class="l" style="left:168px;top:8px">Order:</div><div class="l" style="left:168px;top:28px">Qty:</div><div class="v" style="left:208px;top:28px">4</div><svg style="position:absolute;left:263px;top:25px" width="25" height="23" viewBox="0 0 25 23"><path d="M6.66,1.57 L6.92,-0.68 L8.08,-0.68 L8.34,1.57 L9.34,1.84 L10.69,0.02 L11.69,0.60 L10.79,2.68 L11.52,3.41 L13.60,2.51 L14.18,3.51 L12.36,4.86 L12.63,5.86 L14.88,6.12 L14.88,7.28 L12.63,7.54 L12.36,8.54 L14.18,9.89 L13.60,10.89 L11.52,9.99 L10.79,10.72 L11.69,12.80 L10.69,13.38 L9.34,11.56 L8.34,11.83 L8.08,14.08 L6.92,14.08 L6.66,11.83 L5.66,11.56 L4.31,13.38 L3.31,12.80 L4.21,10.72 L3.48,9.99 L1.40,10.89 L0.82,9.89 L2.64,8.54 L2.37,7.54 L0.12,7.28 L0.12,6.12 L2.37,5.86 L2.64,4.86 L0.82,3.51 L1.40,2.51 L3.48,3.41 L4.21,2.68 L3.31,0.60 L4.31,0.02 L5.66,1.84 Z" fill="#000"/><circle cx="7.5" cy="6.7" r="2.5" fill="#bfd0ef"/><path d="M17.82,2.37 L18.01,0.92 L18.99,0.92 L19.18,2.37 L19.97,2.62 L20.97,1.57 L21.76,2.14 L21.07,3.42 L21.56,4.09 L22.98,3.83 L23.29,4.76 L21.98,5.38 L21.98,6.22 L23.29,6.84 L22.98,7.77 L21.56,7.51 L21.07,8.18 L21.76,9.46 L20.97,10.03 L19.97,8.98 L19.18,9.23 L18.99,10.68 L18.01,10.68 L17.82,9.23 L17.03,8.98 L16.03,10.03 L15.24,9.46 L15.93,8.18 L15.44,7.51 L14.02,7.77 L13.71,6.84 L15.02,6.22 L15.02,5.38 L13.71,4.76 L14.02,3.83 L15.44,4.09 L15.93,3.42 L15.24,2.14 L16.03,1.57 L17.03,2.62 Z" fill="#000"/><circle cx="18.5" cy="5.8" r="1.8" fill="#bfd0ef"/><path d="M15.16,11.57 L15.36,9.93 L16.44,9.93 L16.64,11.57 L17.50,11.85 L18.62,10.63 L19.50,11.27 L18.69,12.72 L19.22,13.45 L20.84,13.12 L21.18,14.16 L19.67,14.85 L19.67,15.75 L21.18,16.44 L20.84,17.48 L19.22,17.15 L18.69,17.88 L19.50,19.33 L18.62,19.97 L17.50,18.75 L16.64,19.03 L16.44,20.67 L15.36,20.67 L15.16,19.03 L14.30,18.75 L13.18,19.97 L12.30,19.33 L13.11,17.88 L12.58,17.15 L10.96,17.48 L10.62,16.44 L12.13,15.75 L12.13,14.85 L10.62,14.16 L10.96,13.12 L12.58,13.45 L13.11,12.72 L12.30,11.27 L13.18,10.63 L14.30,11.85 Z" fill="#000"/><circle cx="15.9" cy="15.3" r="1.9" fill="#bfd0ef"/></svg><div style="position:absolute;left:0;top:0px;width:306px;height:96px"><div class="l" style="top:50px">Date</div><div class="v" style="left:90px;top:50px">1/6/20...</div><div class="vs" style="top:5px;height:60px"></div><div class="hs"></div><div class="l" style="top:78px">Customer: <span style="font-weight:normal"></span></div></div></div>
<div class="a" style="left:121px;top:870px;width:306px;height:2px;background:#bfd0ef"></div>
<div class="a" style="left:121px;top:870px;width:10px;height:2px;background:#d9a31f"></div>
<svg class="a" style="left:130px;top:904.5px" width="13" height="12.5" viewBox="0 0 14 14" preserveAspectRatio="none"><rect x="0" y="0" width="14" height="14" rx="1.5" fill="#c8c8c8"/><g fill="#eaeaea"><rect x="2.5" y="3" width="1.6" height="8" /><path d="M8,3 L4.5,7 L8,11 Z"/><path d="M11.5,3 L8,7 L11.5,11 Z"/></g></svg>
<svg class="a" style="left:160px;top:904.5px" width="13" height="12.5" viewBox="0 0 14 14" preserveAspectRatio="none"><rect x="0" y="0" width="14" height="14" rx="1.5" fill="#c8c8c8"/><g fill="#eaeaea"><rect x="4" y="3" width="1.8" height="8"/><path d="M10.5,3 L6.5,7 L10.5,11 Z"/></g></svg>
<svg class="a" style="left:250px;top:904.5px" width="13" height="12.5" viewBox="0 0 14 14" preserveAspectRatio="none"><rect x="0" y="0" width="14" height="14" rx="1.5" fill="#000"/><g fill="#fff"><rect x="8.2" y="3" width="1.8" height="8"/><path d="M3.5,3 L7.5,7 L3.5,11 Z"/></g></svg>
<svg class="a" style="left:279px;top:904.5px" width="13" height="12.5" viewBox="0 0 14 14" preserveAspectRatio="none"><rect x="0" y="0" width="14" height="14" rx="1.5" fill="#000"/><g fill="#fff"><rect x="9.9" y="3" width="1.6" height="8"/><path d="M6,3 L9.5,7 L6,11 Z"/><path d="M2.5,3 L6,7 L2.5,11 Z"/></g></svg>
<div class="t" style="left:182px;top:906px;font-size:12.5px;color:#1a1a1a;font-weight:normal;transform:scaleX(0.94);transform-origin:0 0;">Page 1 of 6</div>
<div class="t" style="left:305px;top:905px;font-size:12.2px;color:#1a1a1a;font-weight:normal;transform:scaleX(0.95);transform-origin:0 0;">Go To Page</div>
<div class="a" style="left:368px;top:899px;width:75px;height:22px;background:#fff;border:1px solid #a8a8a8"></div>
<div class="t" style="left:373px;top:904.5px;font-size:12.5px;color:#333;font-weight:normal;">1</div>
<div class="a" style="left:426px;top:901px;width:15px;height:18px;background:#e9e9e9;border:1px solid #adadad"></div>
<svg class="a" style="left:429px;top:907px" width="9" height="6" viewBox="0 0 9 6"><path d="M1,1 L4.5,4.5 L8,1" stroke="#606060" stroke-width="1.3" fill="none"/></svg>
<div class="a" style="left:448px;top:907px;width:1px;height:9px;background:#b8552a"></div>
<div class="a sb" style="left:112px;top:929px;width:337px;height:16px;"></div>
<div class="a th" style="left:129px;top:929px;width:212px;height:16px;"></div>
<svg class="a" style="left:116px;top:932px" width="8" height="10" viewBox="0 0 8 10"><path d="M6,1 L2,5 L6,9" stroke="#5a5a5a" stroke-width="1.9" fill="none"/></svg>
<svg class="a" style="left:436px;top:932px" width="8" height="10" viewBox="0 0 8 10"><path d="M2,1 L6,5 L2,9" stroke="#5a5a5a" stroke-width="1.9" fill="none"/></svg>
<div class="t" style="left:455px;top:214px;font-size:24.5px;color:#333;font-weight:normal;transform:scaleX(0.943);transform-origin:0 0;">Priority Management</div>
<div class="a pnl" style="left:722px;top:214px;width:32px;height:37px;border-bottom:none"></div>
<div class="a pnl" style="left:453px;top:250px;width:1083px;height:695px;"></div>
<div class="a" style="left:723px;top:249px;width:30px;height:2px;background:#c0ccd5"></div>
<div class="a" style="left:496px;top:254px;width:985px;height:691px;border:1px solid #b0b0b0;border-bottom:none"></div>
<div class="t" style="left:509px;top:270px;font-size:17.5px;color:#222;font-weight:normal;transform:scaleX(0.905);transform-origin:0 0;">Areas</div>
<div class="a" style="left:509px;top:294px;width:958px;height:650px;background:#fff;border-top:1px solid #b0b0b0;border-left:1px solid #b0b0b0;overflow:hidden">
<div class="cb" style="left:4px;top:5px;"><svg width="11" height="11" viewBox="0 0 11 11"><path d="M1.2,5.8 L3.7,9 L9.6,2.2" stroke="#2a2a2a" stroke-width="1.7" fill="none"/></svg></div><div class="it" style="left:21px;top:6px">(Select All)</div>
<div class="cb" style="left:4px;top:25px;"><svg width="11" height="11" viewBox="0 0 11 11"><path d="M1.2,5.8 L3.7,9 L9.6,2.2" stroke="#2a2a2a" stroke-width="1.7" fill="none"/></svg></div><div class="it" style="left:21px;top:26px">1-Assembly</div>
<div class="cb" style="left:4px;top:45px;"><svg width="11" height="11" viewBox="0 0 11 11"><path d="M1.2,5.8 L3.7,9 L9.6,2.2" stroke="#2a2a2a" stroke-width="1.7" fill="none"/></svg></div><div class="it" style="left:21px;top:46px">3 Through-Hole Build Area</div>
<div class="cb" style="left:4px;top:65px;"><svg width="11" height="11" viewBox="0 0 11 11"><path d="M1.2,5.8 L3.7,9 L9.6,2.2" stroke="#2a2a2a" stroke-width="1.7" fill="none"/></svg></div><div class="it" style="left:21px;top:66px">4 Mechanical Build Area</div>
<div class="cb" style="left:4px;top:85px;"><svg width="11" height="11" viewBox="0 0 11 11"><path d="M1.2,5.8 L3.7,9 L9.6,2.2" stroke="#2a2a2a" stroke-width="1.7" fill="none"/></svg></div><div class="it" style="left:21px;top:86px">5 Final Assembly Build Area</div>
<div class="cb" style="left:4px;top:105px;"><svg width="11" height="11" viewBox="0 0 11 11"><path d="M1.2,5.8 L3.7,9 L9.6,2.2" stroke="#2a2a2a" stroke-width="1.7" fill="none"/></svg></div><div class="it" style="left:21px;top:106px">Assembly Area</div>
<div class="cb" style="left:4px;top:125px;"><svg width="11" height="11" viewBox="0 0 11 11"><path d="M1.2,5.8 L3.7,9 L9.6,2.2" stroke="#2a2a2a" stroke-width="1.7" fill="none"/></svg></div><div class="it" style="left:21px;top:126px">Auto Insertion</div>
<div class="cb" style="left:4px;top:145px;"><svg width="11" height="11" viewBox="0 0 11 11"><path d="M1.2,5.8 L3.7,9 L9.6,2.2" stroke="#2a2a2a" stroke-width="1.7" fill="none"/></svg></div><div class="it" style="left:21px;top:146px">BPM Cell</div>
<div class="cb" style="left:4px;top:165px;"><svg width="11" height="11" viewBox="0 0 11 11"><path d="M1.2,5.8 L3.7,9 L9.6,2.2" stroke="#2a2a2a" stroke-width="1.7" fill="none"/></svg></div><div class="it" style="left:21px;top:166px">Buffering</div>
<div class="cb" style="left:4px;top:185px;"><svg width="11" height="11" viewBox="0 0 11 11"><path d="M1.2,5.8 L3.7,9 L9.6,2.2" stroke="#2a2a2a" stroke-width="1.7" fill="none"/></svg></div><div class="it" style="left:21px;top:186px">Building 1</div>
<div class="cb" style="left:4px;top:205px;"><svg width="11" height="11" viewBox="0 0 11 11"><path d="M1.2,5.8 L3.7,9 L9.6,2.2" stroke="#2a2a2a" stroke-width="1.7" fill="none"/></svg></div><div class="it" style="left:21px;top:206px">Cabin Assembly Area</div>
<div class="cb" style="left:4px;top:225px;"><svg width="11" height="11" viewBox="0 0 11 11"><path d="M1.2,5.8 L3.7,9 L9.6,2.2" stroke="#2a2a2a" stroke-width="1.7" fill="none"/></svg></div><div class="it" style="left:21px;top:226px">Engine Assembly Area</div>
<div class="cb" style="left:4px;top:245px;"><svg width="11" height="11" viewBox="0 0 11 11"><path d="M1.2,5.8 L3.7,9 L9.6,2.2" stroke="#2a2a2a" stroke-width="1.7" fill="none"/></svg></div><div class="it" style="left:21px;top:246px">Feeder Cells</div>
<div class="cb" style="left:4px;top:265px;border-color:#3d8ee6;background:#eef5fc"><svg width="11" height="11" viewBox="0 0 11 11"><path d="M1.2,5.8 L3.7,9 L9.6,2.2" stroke="#2a2a2a" stroke-width="1.7" fill="none"/></svg></div><div class="it" style="left:21px;top:266px">Final Integration</div>
<div class="cb" style="left:4px;top:285px;"><svg width="11" height="11" viewBox="0 0 11 11"><path d="M1.2,5.8 L3.7,9 L9.6,2.2" stroke="#2a2a2a" stroke-width="1.7" fill="none"/></svg></div><div class="it" style="left:21px;top:286px">Frame Assembly Area</div>
<div class="cb" style="left:4px;top:305px;"><svg width="11" height="11" viewBox="0 0 11 11"><path d="M1.2,5.8 L3.7,9 L9.6,2.2" stroke="#2a2a2a" stroke-width="1.7" fill="none"/></svg></div><div class="it" style="left:21px;top:306px">HTI 2532 Lid (2 Piece)</div>
<div class="cb" style="left:4px;top:325px;"><svg width="11" height="11" viewBox="0 0 11 11"><path d="M1.2,5.8 L3.7,9 L9.6,2.2" stroke="#2a2a2a" stroke-width="1.7" fill="none"/></svg></div><div class="it" style="left:21px;top:326px">HTI 3250 MPC Assembly</div>
<div class="cb" style="left:4px;top:345px;"><svg width="11" height="11" viewBox="0 0 11 11"><path d="M1.2,5.8 L3.7,9 L9.6,2.2" stroke="#2a2a2a" stroke-width="1.7" fill="none"/></svg></div><div class="it" style="left:21px;top:346px">HTI 3251 Basket Assy</div>
<div class="cb" style="left:4px;top:365px;"><svg width="11" height="11" viewBox="0 0 11 11"><path d="M1.2,5.8 L3.7,9 L9.6,2.2" stroke="#2a2a2a" stroke-width="1.7" fill="none"/></svg></div><div class="it" style="left:21px;top:366px">HTI 3252 Basket Support</div>
<div class="cb" style="left:4px;top:385px;"><svg width="11" height="11" viewBox="0 0 11 11"><path d="M1.2,5.8 L3.7,9 L9.6,2.2" stroke="#2a2a2a" stroke-width="1.7" fill="none"/></svg></div><div class="it" style="left:21px;top:386px">HTI 3253 Lid (1 Piece)</div>
<div class="cb" style="left:4px;top:405px;"><svg width="11" height="11" viewBox="0 0 11 11"><path d="M1.2,5.8 L3.7,9 L9.6,2.2" stroke="#2a2a2a" stroke-width="1.7" fill="none"/></svg></div><div class="it" style="left:21px;top:406px">Injection Molding</div>
<div class="cb" style="left:4px;top:425px;"><svg width="11" height="11" viewBox="0 0 11 11"><path d="M1.2,5.8 L3.7,9 L9.6,2.2" stroke="#2a2a2a" stroke-width="1.7" fill="none"/></svg></div><div class="it" style="left:21px;top:426px">Injection Molding Area</div>
<div class="cb" style="left:4px;top:445px;"><svg width="11" height="11" viewBox="0 0 11 11"><path d="M1.2,5.8 L3.7,9 L9.6,2.2" stroke="#2a2a2a" stroke-width="1.7" fill="none"/></svg></div><div class="it" style="left:21px;top:446px">Jacketing</div>
<div class="cb" style="left:4px;top:465px;"><svg width="11" height="11" viewBox="0 0 11 11"><path d="M1.2,5.8 L3.7,9 L9.6,2.2" stroke="#2a2a2a" stroke-width="1.7" fill="none"/></svg></div><div class="it" style="left:21px;top:466px">Large System Build</div>
<div class="cb" style="left:4px;top:485px;"><svg width="11" height="11" viewBox="0 0 11 11"><path d="M1.2,5.8 L3.7,9 L9.6,2.2" stroke="#2a2a2a" stroke-width="1.7" fill="none"/></svg></div><div class="it" style="left:21px;top:486px">Machining</div>
<div class="cb" style="left:4px;top:505px;"><svg width="11" height="11" viewBox="0 0 11 11"><path d="M1.2,5.8 L3.7,9 L9.6,2.2" stroke="#2a2a2a" stroke-width="1.7" fill="none"/></svg></div><div class="it" style="left:21px;top:506px">Main Stock</div>
<div class="cb" style="left:4px;top:525px;"><svg width="11" height="11" viewBox="0 0 11 11"><path d="M1.2,5.8 L3.7,9 L9.6,2.2" stroke="#2a2a2a" stroke-width="1.7" fill="none"/></svg></div><div class="it" style="left:21px;top:526px">Mechanical Assembly</div>
<div class="cb" style="left:4px;top:545px;"><svg width="11" height="11" viewBox="0 0 11 11"><path d="M1.2,5.8 L3.7,9 L9.6,2.2" stroke="#2a2a2a" stroke-width="1.7" fill="none"/></svg></div><div class="it" style="left:21px;top:546px">Mechanical Assy</div>
<div class="cb" style="left:4px;top:565px;"><svg width="11" height="11" viewBox="0 0 11 11"><path d="M1.2,5.8 L3.7,9 L9.6,2.2" stroke="#2a2a2a" stroke-width="1.7" fill="none"/></svg></div><div class="it" style="left:21px;top:566px">Metrology</div>
<div class="cb" style="left:4px;top:585px;"><svg width="11" height="11" viewBox="0 0 11 11"><path d="M1.2,5.8 L3.7,9 L9.6,2.2" stroke="#2a2a2a" stroke-width="1.7" fill="none"/></svg></div><div class="it" style="left:21px;top:586px">Micro Electronics</div>
<div class="cb" style="left:4px;top:605px;"><svg width="11" height="11" viewBox="0 0 11 11"><path d="M1.2,5.8 L3.7,9 L9.6,2.2" stroke="#2a2a2a" stroke-width="1.7" fill="none"/></svg></div><div class="it" style="left:21px;top:606px">Module Assembly</div>
<div class="cb" style="left:4px;top:625px;"><svg width="11" height="11" viewBox="0 0 11 11"><path d="M1.2,5.8 L3.7,9 L9.6,2.2" stroke="#2a2a2a" stroke-width="1.7" fill="none"/></svg></div><div class="it" style="left:21px;top:626px">Optical Inspection</div>
<div class="cb" style="left:4px;top:645px;"><svg width="11" height="11" viewBox="0 0 11 11"><path d="M1.2,5.8 L3.7,9 L9.6,2.2" stroke="#2a2a2a" stroke-width="1.7" fill="none"/></svg></div><div class="it" style="left:21px;top:646px">Power Assembly Area</div>
</div>
<div class="a sb" style="left:1537px;top:196px;width:16px;height:748px;"></div>
<div class="a th" style="left:1537px;top:213px;width:16px;height:546px;"></div>
<svg class="a" style="left:1540px;top:200px" width="10" height="8" viewBox="0 0 10 8"><path d="M1,6 L5,2 L9,6" stroke="#5a5a5a" stroke-width="1.9" fill="none"/></svg>
<svg class="a" style="left:1540px;top:932px" width="10" height="8" viewBox="0 0 10 8"><path d="M1,2 L5,6 L9,2" stroke="#5a5a5a" stroke-width="1.9" fill="none"/></svg>
<svg class="a" style="left:368px;top:87px;" width="20" height="10" viewBox="0 0 20 10"><path d="M5,1 H15 Q17,1 17,3 V5 H3 V3 Q3,1 5,1 Z" fill="#0a0a0a"/><circle cx="5" cy="5.3" r="4.4" fill="#0a0a0a"/><circle cx="15" cy="5.3" r="4.4" fill="#0a0a0a"/><circle cx="5" cy="5.3" r="2.6" fill="none" stroke="#888" stroke-width="0.7"/><circle cx="15" cy="5.3" r="2.6" fill="none" stroke="#888" stroke-width="0.7"/><circle cx="6" cy="4.2" r="0.9" fill="#ddd"/><circle cx="16" cy="4.2" r="0.9" fill="#ddd"/></svg>
<svg class="a" style="left:1132px;top:141px;" width="20" height="10" viewBox="0 0 20 10"><path d="M5,1 H15 Q17,1 17,3 V5 H3 V3 Q3,1 5,1 Z" fill="#0a0a0a"/><circle cx="5" cy="5.3" r="4.4" fill="#0a0a0a"/><circle cx="15" cy="5.3" r="4.4" fill="#0a0a0a"/><circle cx="5" cy="5.3" r="2.6" fill="none" stroke="#888" stroke-width="0.7"/><circle cx="15" cy="5.3" r="2.6" fill="none" stroke="#888" stroke-width="0.7"/><circle cx="6" cy="4.2" r="0.9" fill="#ddd"/><circle cx="16" cy="4.2" r="0.9" fill="#ddd"/></svg>
<svg class="a" style="left:1168px;top:145px;" width="24" height="11" viewBox="0 0 24 11"><circle cx="5.3" cy="6.3" r="3" fill="#000"/><circle cx="12" cy="6.3" r="3" fill="#000"/><circle cx="18.7" cy="6.3" r="3" fill="#000"/></svg>
<svg class="a" style="left:1013px;top:167px" width="22" height="22" viewBox="1013 167 22 22"><path d="M1022.8,169.5 L1030.2,173.3 V178.5 M1022.2,186.3 L1015.5,182.6 V173.3 L1022.8,169.5 M1015.5,173.3 L1022.5,177 L1030.2,173.3 M1022.5,177 V186.3" fill="none" stroke="#0a0a0a" stroke-width="1.7" stroke-linejoin="round"/><path d="M1027.39,180.08 L1027.56,178.73 L1028.64,178.73 L1028.81,180.08 L1029.63,180.38 L1030.62,179.45 L1031.45,180.15 L1030.71,181.29 L1031.15,182.04 L1032.50,181.97 L1032.69,183.04 L1031.40,183.44 L1031.25,184.30 L1032.33,185.11 L1031.78,186.06 L1030.54,185.53 L1029.87,186.09 L1030.17,187.41 L1029.15,187.78 L1028.54,186.57 L1027.66,186.57 L1027.05,187.78 L1026.03,187.41 L1026.33,186.09 L1025.66,185.53 L1024.42,186.06 L1023.87,185.11 L1024.95,184.30 L1024.80,183.44 L1023.51,183.04 L1023.70,181.97 L1025.05,182.04 L1025.49,181.29 L1024.75,180.15 L1025.58,179.45 L1026.57,180.38 Z" fill="#0a0a0a"/><circle cx="1028.1" cy="183.3" r="1.6" fill="#c0ccd5"/><circle cx="1028.1" cy="183.3" r="5.6" fill="none" stroke="#c0ccd5" stroke-width="0.9"/></svg>
<svg class="a" style="left:1051px;top:168px" width="20" height="20" viewBox="1051 168 20 20"><g fill="#0a0a0a"><rect x="1056" y="169" width="9" height="5" rx="2.6" ry="1.6"/><rect x="1061.4" y="171.5" width="8.6" height="4.6" rx="2.6" ry="1.6"/><rect x="1061.4" y="176.6" width="8.6" height="3.9" rx="2.6" ry="1.6"/><rect x="1061.4" y="181" width="8.6" height="3.7" rx="2.6" ry="1.6"/></g><g fill="#000" stroke="#c0ccd5" stroke-width="0.9"><rect x="1052.2" y="173.5" width="9.2" height="5.3" rx="2.6" ry="1.6"/><rect x="1052.2" y="179" width="9.2" height="3.9" rx="2.6" ry="1.6"/><rect x="1052.2" y="183" width="9.2" height="3.7" rx="2.6" ry="1.6"/></g></svg>
<svg class="a" style="left:1090px;top:166px" width="18" height="22" viewBox="1090 166 18 22"><rect x="1092.5" y="171" width="12.8" height="15.2" rx="1" fill="none" stroke="#0a0a0a" stroke-width="1.7"/><path d="M1095.6,170 H1102.3 V172.6 H1095.6 Z" fill="#0a0a0a"/><circle cx="1099" cy="169.3" r="1.4" fill="#0a0a0a"/><path d="M1095.3,178.4 H1099.5 V176.2 L1103,179.2 L1099.5,182.2 V180.1 H1095.3 Z" fill="#0a0a0a"/></svg>
<svg class="a" style="left:1126px;top:167px" width="22" height="22" viewBox="1126 167 22 22"><ellipse cx="1135.8" cy="173.9" rx="3.7" ry="4.9" fill="#0a0a0a"/><path d="M1128.2,184.6 Q1128.5,179.8 1132.5,178.8 Q1135.5,180 1138.5,178.8 L1136,180.5 V184.6 Z" fill="#0a0a0a"/><rect x="1136" y="180.4" width="10" height="6.4" rx="0.8" fill="#0a0a0a"/><path d="M1139.2,180.6 V178.8 H1142.8 V180.6" stroke="#0a0a0a" stroke-width="1.1" fill="none"/></svg>
<svg class="a" style="left:1169px;top:169px" width="22" height="20" viewBox="1169 169 22 20"><path d="M1170.8,176.4 L1176.8,182.6 L1186.4,171.8" stroke="#0a0a0a" stroke-width="3.7" fill="none" stroke-linejoin="miter"/><circle cx="1185" cy="183" r="5.8" fill="#c0ccd5"/><path d="M1184.27,179.68 L1184.44,178.33 L1185.56,178.33 L1185.73,179.68 L1186.58,179.99 L1187.57,179.07 L1188.43,179.78 L1187.69,180.93 L1188.14,181.70 L1189.50,181.64 L1189.69,182.74 L1188.40,183.14 L1188.24,184.03 L1189.32,184.85 L1188.76,185.82 L1187.51,185.29 L1186.82,185.87 L1187.12,187.20 L1186.07,187.58 L1185.45,186.37 L1184.55,186.37 L1183.93,187.58 L1182.88,187.20 L1183.18,185.87 L1182.49,185.29 L1181.24,185.82 L1180.68,184.85 L1181.76,184.03 L1181.60,183.14 L1180.31,182.74 L1180.50,181.64 L1181.86,181.70 L1182.31,180.93 L1181.57,179.78 L1182.43,179.07 L1183.42,179.99 Z" fill="#0a0a0a"/><circle cx="1185" cy="183" r="1.6" fill="#c0ccd5"/></svg>
<svg class="a" style="left:1482px;top:83px;" width="19" height="18" viewBox="0 0 19 18"><rect x="1" y="1" width="16" height="11.5" rx="1.5" fill="none" stroke="#0a0a0a" stroke-width="1.7"/><path d="M2.5,17 Q5,15.5 7,15.5 V13 H9 V17 Z" fill="#0a0a0a"/><circle cx="13.7" cy="13.7" r="4.2" fill="#fff"/><circle cx="13.7" cy="13.7" r="3.5" fill="none" stroke="#0a0a0a" stroke-width="1.6"/><path d="M11,13.7 L13.7,11.5 L16.3,13.7 L13.7,16 Z" fill="#fff"/></svg>
<svg class="a" style="left:1518px;top:83px;" width="20" height="19" viewBox="0 0 20 19"><circle cx="5" cy="5" r="4.5" fill="#9aa3a8"/><circle cx="10" cy="7.5" r="4.5" fill="#4a5156"/><circle cx="14.5" cy="13.5" r="4" fill="none" stroke="#0a0a0a" stroke-width="2"/><path d="M3,4 Q10,3 14,12" stroke="#c0ccd5" stroke-width="1.3" fill="none"/><path d="M12,11 L15,14.5 L16.5,10.5" fill="#0a0a0a"/></svg>
<svg class="a" style="left:689px;top:218px;" width="18" height="18" viewBox="0 0 18 18"><rect x="0" y="0" width="14.5" height="17.7" fill="#0a0a0a"/><path d="M5.5,15.5 L6.5,12 L15,3.5 L17.3,5.8 L8.8,14.3 Z" fill="#000" stroke="#fff" stroke-width="0.9"/></svg>
<svg class="a" style="left:729px;top:220px;" width="18" height="17" viewBox="0 0 18 17"><rect x="1.5" y="0.7" width="15" height="10.3" rx="2.5" fill="none" stroke="#0a0a0a" stroke-width="1.2"/><g fill="#0a0a0a"><rect x="3.5" y="2.3" width="3" height="3" rx="1"/><rect x="3.5" y="6.3" width="3" height="3" rx="1"/><rect x="7.5" y="2.3" width="3" height="3" rx="1"/><rect x="7.5" y="6.3" width="3" height="3" rx="1"/><rect x="11.5" y="2.3" width="3" height="3" rx="1"/><rect x="11.5" y="6.3" width="3" height="3" rx="1"/></g><path d="M1.2,15.6 L3.2,13.2 M5,16.2 L5.8,13 M9,16.2 V13 M13,16.2 L12.2,13 M16.8,15.6 L14.8,13.2" stroke="#222" stroke-width="1.25"/></svg>
</body></html>
